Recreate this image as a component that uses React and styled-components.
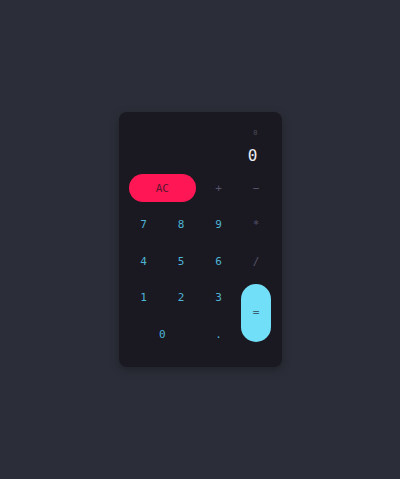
import React from "react";
import styled, { createGlobalStyle } from "styled-components";

const Global = createGlobalStyle`
  html, body { margin: 0; padding: 0; }
  body {
    background: #2b2e38;
    font-family: "DejaVu Sans Mono", "Liberation Mono", monospace;
  }
`;

const Page = styled.div`
  width: 100vw;
  height: 100vh;
  display: flex;
  align-items: center;
  justify-content: center;
`;

const Card = styled.div`
  width: 163px;
  height: 255px;
  box-sizing: border-box;
  background: #1a1921;
  border-radius: 8px;
  box-shadow: 0 3px 10px rgba(0, 0, 0, 0.28);
  padding: 17px 0 19px 10px;
  display: flex;
  flex-direction: column;
`;

const Display = styled.div`
  display: flex;
  flex-direction: column;
  align-items: flex-end;
  padding-right: 24px;
  gap: 9.5px;
  margin-bottom: 9.5px;
`;

const Previous = styled.div`
  font-size: 7px;
  line-height: 8px;
  color: #4a4958;
`;

const Current = styled.div`
  font-size: 16px;
  line-height: 18px;
  color: #ececf0;
`;

const Keys = styled.div`
  display: grid;
  grid-template-columns: repeat(4, 30px);
  grid-template-rows: repeat(5, 28px);
  column-gap: 7.5px;
  row-gap: 8.5px;
`;

const Key = styled.button`
  border: none;
  margin: 0;
  padding: 0;
  font-family: inherit;
  font-size: 11px;
  line-height: 1;
  display: flex;
  align-items: center;
  justify-content: center;
  cursor: pointer;
  background: ${(p) => p.$bg || "transparent"};
  color: ${(p) => p.$color || "#4db4d4"};
  border-radius: ${(p) => (p.$bg ? "999px" : "0")};
  grid-column: ${(p) => p.$col || "auto"};
  grid-row: ${(p) => p.$row || "auto"};
  height: ${(p) => p.$h || "28px"};
  align-self: start;
`;

const op = "#55536b";

export default function App() {
  return (
    <>
      <Global />
      <Page>
        <Card>
          <Display>
            <Previous>0</Previous>
            <Current>0</Current>
          </Display>
          <Keys>
            <Key $col="1 / span 2" $bg="#ff1654" $color="#5e1530">AC</Key>
            <Key $color={op}>+</Key>
            <Key $color={op}>−</Key>
            <Key>7</Key>
            <Key>8</Key>
            <Key>9</Key>
            <Key $color={op}>*</Key>
            <Key>4</Key>
            <Key>5</Key>
            <Key>6</Key>
            <Key $color={op}>/</Key>
            <Key>1</Key>
            <Key>2</Key>
            <Key>3</Key>
            <Key $col="4" $row="4 / span 2" $h="58px" $bg="#72dff9" $color="#3b5f73">=</Key>
            <Key $col="1 / span 2">0</Key>
            <Key>.</Key>
          </Keys>
        </Card>
      </Page>
    </>
  );
}
